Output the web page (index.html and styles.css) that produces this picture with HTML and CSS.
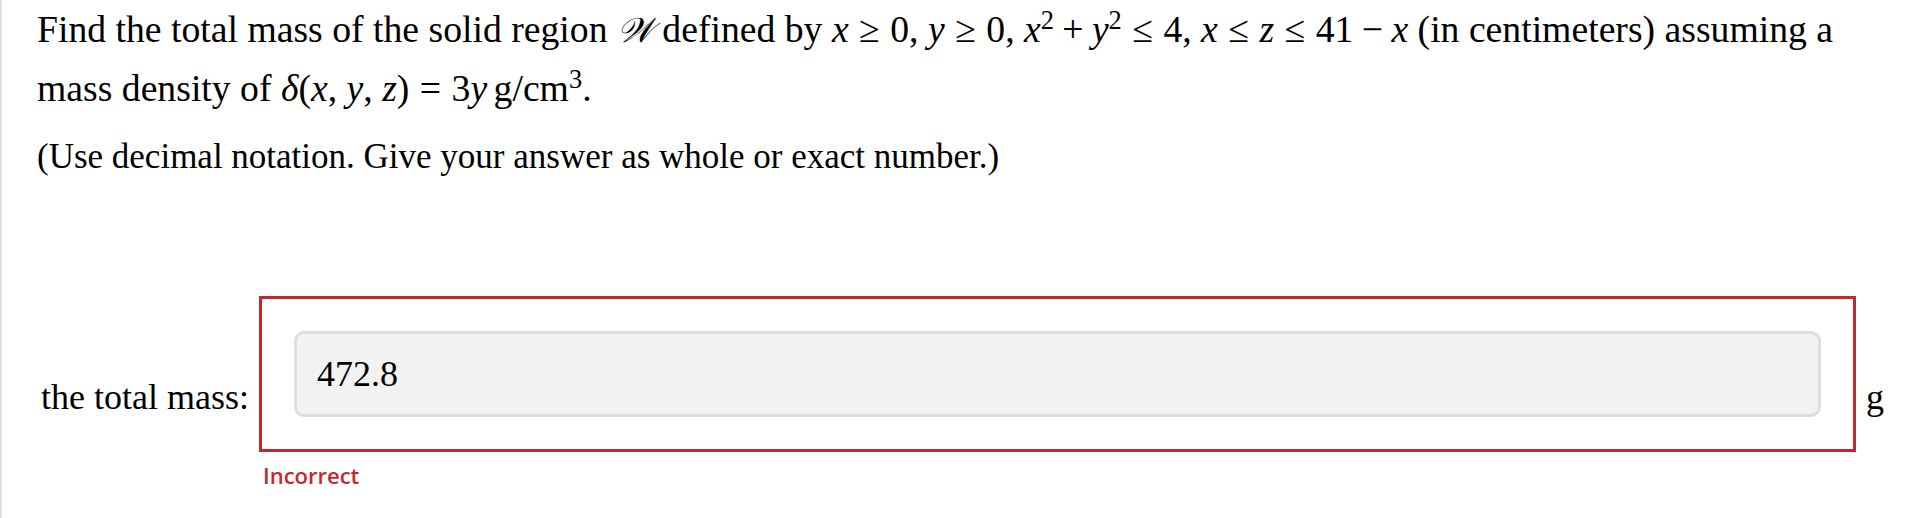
FILE: index.html
```html
<!DOCTYPE html>
<html lang="en">
<head>
<meta charset="utf-8">
<title>Total mass question</title>
<link rel="stylesheet" href="styles.css">
</head>
<body>
<div class="page">
  <p class="prompt">Find the total mass of the solid region <span class="cal">𝒲</span> defined by <span class="math"><i>x</i><span class="rel">≥</span>0,<span class="sep"></span><i>y</i><span class="rel">≥</span>0,<span class="sep"></span><i>x</i><sup>2</sup><span class="bin">+</span><i>y</i><sup>2</sup><span class="rel">≤</span>4,<span class="sep"></span><i>x</i><span class="rel">≤</span><i>z</i><span class="rel">≤</span>41<span class="bin">−</span><i>x</i></span> (in centimeters) assuming a mass density of <span class="math"><i>δ</i>(<i>x</i>,<span class="sep"></span><i>y</i>,<span class="sep"></span><i>z</i>)<span class="rel">=</span>3<i>y</i><span class="thin"></span>g/cm<sup>3</sup></span>.</p>
  <p class="note">(Use decimal notation. Give your answer as whole or exact number.)</p>
  <div class="answer-row">
    <span class="label">the total mass:</span>
    <div class="answer-col">
      <div class="answer-box">
        <input class="answer-input" type="text" value="472.8" readonly>
      </div>
      <div class="feedback">Incorrect</div>
    </div>
    <span class="unit">g</span>
  </div>
</div>
</body>
</html>
```

FILE: styles.css
```css
html, body {
  margin: 0;
  padding: 0;
  background: #ffffff;
}

.page {
  box-sizing: border-box;
  min-height: 518px;
  border-left: 2px solid #dedede;
  padding: 0 38px 0 35px;
  font-family: "Liberation Serif", "Times New Roman", serif;
  font-size: 36px;
  color: #000000;
}

.prompt {
  margin: 0;
  font-size: 37.7px;
  line-height: 58px;
}

.note {
  margin: 11px 0 0 0;
  font-size: 35px;
  line-height: 58px;
}

.math i,
.cal {
  font-style: italic;
}

.cal {
  font-family: "DejaVu Serif", "Liberation Serif", serif;
  font-size: 0.92em;
}

.rel {
  margin: 0 0.278em;
}

.bin {
  margin: 0 0.222em;
}

.sep {
  display: inline-block;
  width: 0.25em;
}

.thin {
  display: inline-block;
  width: 0.17em;
}

sup {
  font-size: 0.7em;
  line-height: 0;
  vertical-align: 0.5em;
}

.answer-row {
  display: flex;
  align-items: center;
  gap: 10px;
  margin-top: 110px;
  padding-left: 4px;
}

.label {
  flex: none;
  white-space: nowrap;
}

.answer-col {
  flex: 1;
  display: flex;
  flex-direction: column;
}

.answer-box {
  border: 3px solid #c4282e;
  padding: 32px;
}

.answer-input {
  display: block;
  box-sizing: border-box;
  width: 100%;
  height: 86px;
  margin: 0;
  padding: 0 20px;
  border: 3px solid #dddddd;
  border-radius: 10px;
  background: #f2f2f2;
  font-family: "Liberation Serif", "Times New Roman", serif;
  font-size: 36px;
  color: #000000;
  outline: none;
}

.feedback {
  margin-top: 8px;
  padding: 0 0 8px 4px;
  font-family: "Open Sans", "Liberation Sans", sans-serif;
  font-weight: 600;
  font-size: 22px;
  line-height: 30px;
  color: #c4282e;
}

.unit {
  flex: none;
}
```
